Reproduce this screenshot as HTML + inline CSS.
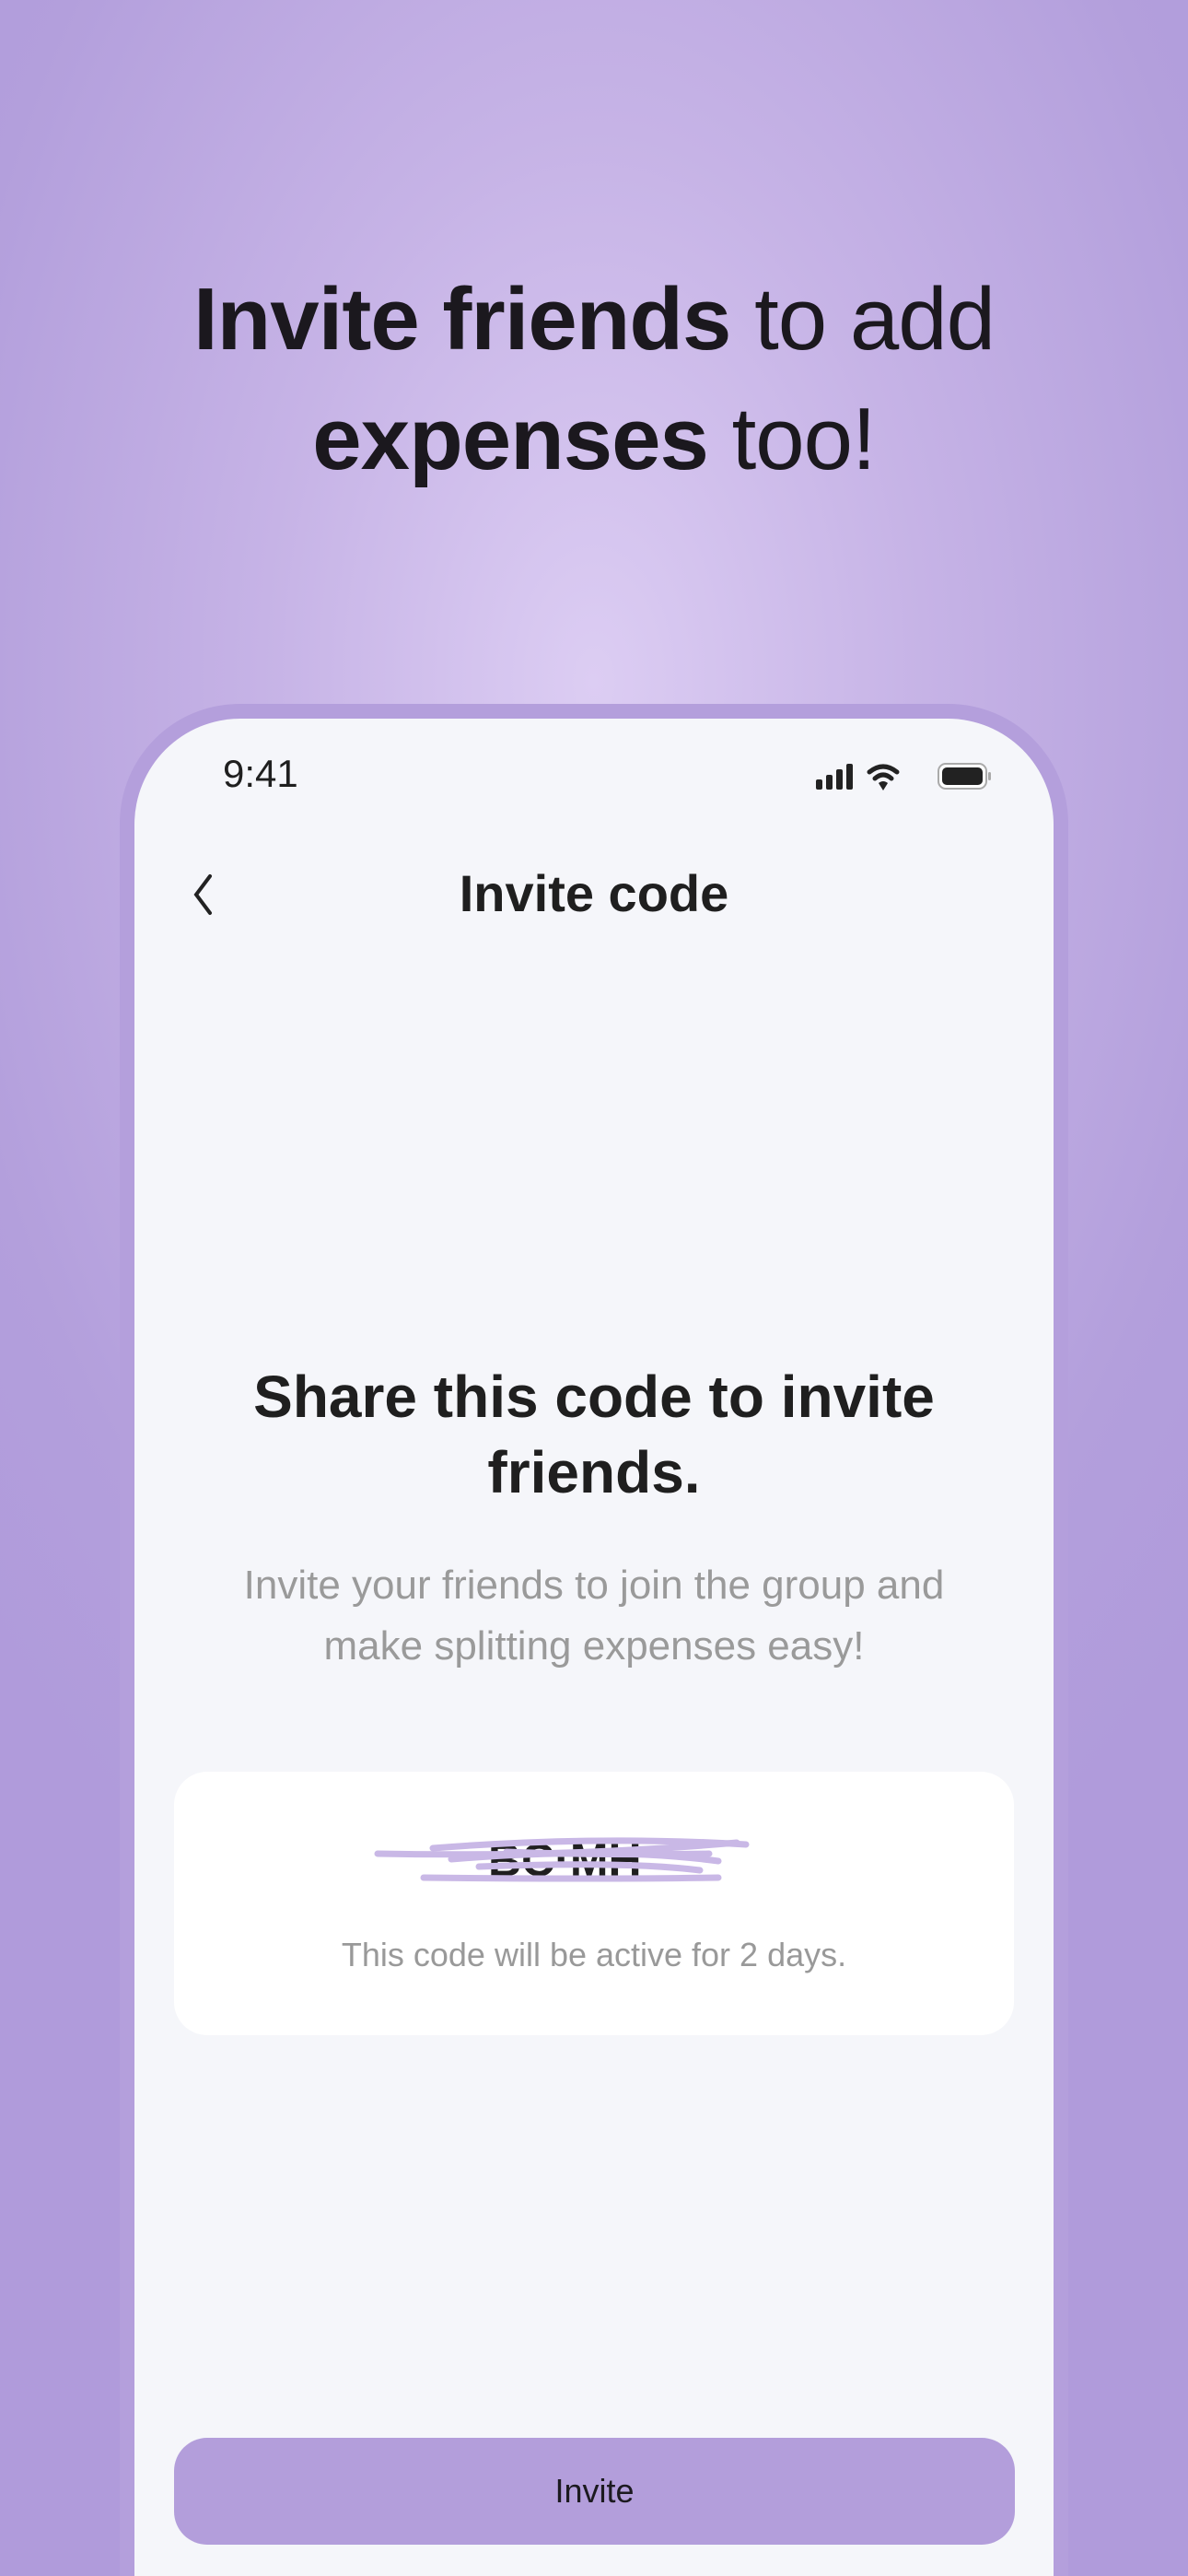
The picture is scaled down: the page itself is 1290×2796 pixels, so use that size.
<!DOCTYPE html>
<html style="width:1290px;height:2796px;overflow:hidden"><head><meta charset="utf-8"><style>
html,body{margin:0;padding:0}
body{width:1290px;height:2796px;overflow:hidden;position:relative;font-family:"Liberation Sans",sans-serif;
background:radial-gradient(ellipse 900px 1500px at 645px 740px,#dccdf3 0%,#c6b3e6 40%,#b39fdc 80%,#b09bdb 100%);}
.h{position:absolute;left:0;width:1290px;top:282px;text-align:center;font-size:96px;line-height:130px;color:#1b181e;letter-spacing:-1px}
.h b{font-weight:700}
.phone{position:absolute;left:130px;top:764px;width:1030px;height:2032px;background:#b49fdc;border-radius:130px 130px 0 0}
.scr{position:absolute;left:146px;top:780px;width:998px;height:2016px;background:#f5f6fa;border-radius:115px 115px 0 0}
.t{position:absolute;color:#1f1f1f}
</style></head><body>
<div class="h"><b>Invite friends</b> to add<br><b>expenses</b> too!</div>
<div class="phone"></div>
<div class="scr"></div>
<div class="t" style="left:242px;top:816px;font-size:42px;">9:41</div>
<svg style="position:absolute;left:884px;top:826px" width="196" height="36" viewBox="0 0 196 36">
<rect x="2" y="20" width="7" height="11" rx="2" fill="#222"/>
<rect x="13" y="15" width="7" height="16" rx="2" fill="#222"/>
<rect x="24" y="9" width="7" height="22" rx="2" fill="#222"/>
<rect x="35" y="3" width="7" height="28" rx="2" fill="#222"/>
<path d="M60 12 Q75 0 90 12" stroke="#222" stroke-width="5" fill="none" stroke-linecap="round"/>
<path d="M66 19 Q75 11 84 19" stroke="#222" stroke-width="5" fill="none" stroke-linecap="round"/>
<path d="M70 24 L75 32 L80 24 Q75 20 70 24Z" fill="#222"/>
<rect x="135" y="3" width="52" height="27" rx="8" fill="#fff" stroke="#aaa" stroke-width="2"/>
<rect x="139" y="7" width="44" height="19" rx="5" fill="#222"/>
<rect x="189" y="12" width="3" height="9" rx="1.5" fill="#aaa"/>
</svg>
<svg style="position:absolute;left:208px;top:948px" width="24" height="46" viewBox="0 0 24 46"><path d="M20 3 L5 23 L20 43" stroke="#222" stroke-width="4" fill="none" stroke-linecap="round"/></svg>
<div class="t" style="left:0;width:1290px;text-align:center;top:937px;font-size:56px;font-weight:700;">Invite code</div>
<div class="t" style="left:146px;width:998px;text-align:center;top:1475px;font-size:64px;line-height:82px;font-weight:700;">Share this code to invite<br>friends.</div>
<div class="t" style="left:146px;width:998px;text-align:center;top:1688px;font-size:44px;line-height:66px;color:#9a9a9a;">Invite your friends to join the group and<br>make splitting expenses easy!</div>
<div style="position:absolute;left:189px;top:1923px;width:912px;height:286px;background:#fff;border-radius:36px"></div>
<div class="t" style="left:530px;top:1990px;font-size:50px;font-weight:700;">BC·MH</div>
<svg style="position:absolute;left:400px;top:1990px" width="420" height="60" viewBox="0 0 420 60">
<g stroke="#c9b8e6" stroke-width="7" fill="none" stroke-linecap="round">
<path d="M70 16 Q250 2 410 12"/><path d="M10 22 Q220 26 400 10"/><path d="M90 28 Q260 14 380 30"/><path d="M60 48 Q250 50 380 48"/><path d="M120 36 Q280 30 360 40"/><path d="M150 20 Q250 24 370 22"/>
</g></svg>
<div class="t" style="left:146px;width:998px;text-align:center;top:2101px;font-size:36px;color:#999;">This code will be active for 2 days.</div>
<div style="position:absolute;left:189px;top:2646px;width:913px;height:116px;background:#b39edb;border-radius:36px;text-align:center;line-height:116px;font-size:36px;color:#1c1a20">Invite</div>
</body></html>
